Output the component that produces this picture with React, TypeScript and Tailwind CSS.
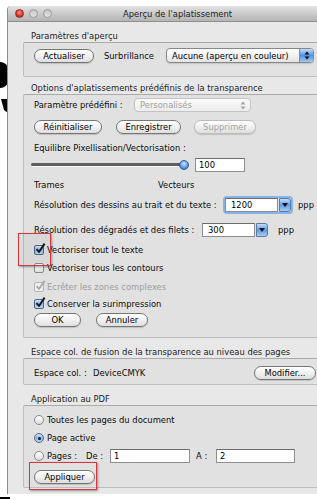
import React from "react";

type Kids = { children?: React.ReactNode; className?: string };

function Btn({ className = "", disabled = false, children }: Kids & { disabled?: boolean }) {
  return (
    <div
      className={`h-[14px] shrink-0 flex items-center justify-center rounded-full border bg-linear-to-b from-white via-[#f1f1f1] to-[#dedede] shadow-[0_1px_1px_rgba(0,0,0,0.15)] ${
        disabled ? "border-[#bcbcbc] text-[#a2a2a2]" : "border-[#767676] text-[#000000]"
      } ${className}`}
    >
      {children}
    </div>
  );
}

function Check({ checked = false, disabled = false }: { checked?: boolean; disabled?: boolean }) {
  return (
    <div className="relative w-[10px] h-[10px] shrink-0">
      <div
        className={`w-[10px] h-[10px] rounded-[2px] border ${
          disabled
            ? "border-[#b3b3b3] bg-[#f1f1f1]"
            : checked
            ? "border-[#4f6684] bg-linear-to-b from-[#d5e7fa] via-[#86b7ea] to-[#bcd9f6]"
            : "border-[#8a8a8a] bg-linear-to-b from-white to-[#dedede]"
        }`}
      />
      {checked && (
        <svg className="absolute left-[1px] top-[-2px]" width="11" height="11" viewBox="0 0 11 11">
          <path
            d="M1.6 6.2 L4 9 L9.6 0.6"
            fill="none"
            stroke={disabled ? "#a9a9a9" : "#161616"}
            strokeWidth="1.9"
            strokeLinejoin="round"
          />
        </svg>
      )}
    </div>
  );
}

function Radio({ on = false }: { on?: boolean }) {
  return (
    <div
      className={`w-[10px] h-[10px] shrink-0 rounded-full border flex items-center justify-center ${
        on
          ? "border-[#4f6684] bg-linear-to-b from-[#d5e7fa] via-[#86b7ea] to-[#bcd9f6]"
          : "border-[#8a8a8a] bg-linear-to-b from-white to-[#dedede]"
      }`}
    >
      {on && <div className="w-[3px] h-[3px] rounded-full bg-[#1a1a1a]" />}
    </div>
  );
}

function UpDown({ color = "#111111" }: { color?: string }) {
  return (
    <svg width="6" height="9" viewBox="0 0 6 9">
      <path d="M3 0.5 L5.5 3.5 H0.5 Z M3 8.5 L5.5 5.5 H0.5 Z" fill={color} />
    </svg>
  );
}

function Combo({ value, className = "", focus = false }: { value: string; className?: string; focus?: boolean }) {
  return (
    <div
      className={`h-[14px] shrink-0 flex items-stretch rounded-[2px] ${
        focus ? "shadow-[0_0_0_2px_#86b4ea]" : ""
      } ${className}`}
    >
      <div className="flex-1 bg-white border border-[#8c8c8c] border-t-[#6c6c6c] flex items-center pl-[5px] text-[#000000]">
        {value}
      </div>
      <div className="w-[12px] ml-[1px] rounded-r-[3px] border border-[#5b79a0] bg-linear-to-b from-[#c4ddf8] via-[#5b9be3] to-[#a6cdf4] flex items-center justify-center">
        <svg width="6" height="4" viewBox="0 0 6 4">
          <path d="M0 0 H6 L3 4 Z" fill="#111111" />
        </svg>
      </div>
    </div>
  );
}

function Group({ className = "", children }: Kids) {
  return (
    <div
      className={`ml-[15px] mr-[28px] border border-[#bdbdbd] border-t-[#aaaaaa] bg-[#e1e1e1] rounded-[2px] pl-[10px] ${className}`}
    >
      {children}
    </div>
  );
}

function Label({ className = "", children }: Kids) {
  return <div className={`h-[12px] flex items-center ml-[23px] text-[#1c1c1c] ${className}`}>{children}</div>;
}

export default function App() {
  return (
    <div className="relative w-[317px] h-[500px] overflow-hidden bg-white pl-[7px] pt-[6px] font-['DejaVu_Sans',sans-serif] text-[8.4px] leading-[12px] text-[#0a0a0a]">
      {/* background shapes behind the window */}
      <svg className="absolute left-0 top-[58px]" width="12" height="60" viewBox="0 0 12 60">
        <path d="M0 4 C6 4 10 10 10 17 C10 24 6 30 0 30 Z" fill="#000" />
        <path d="M1 41 L10 41 L10 45 L8 55 L4 52 Z" fill="#000" />
      </svg>
      <div className="absolute left-[315px] top-[6px] w-[2px] h-[20px] bg-black" />
      <div className="absolute left-0 top-[497px] w-[10px] h-[2px] bg-black" />

      {/* window */}
      <div className="relative z-10 w-[340px] h-[488px] flex flex-col border-l border-[#8c8c8c] bg-[#e8e8e8] rounded-t-[4px]">
        {/* title bar */}
        <div className="h-[16px] shrink-0 flex items-center rounded-t-[4px] bg-linear-to-b from-[#e2e2e2] to-[#b4b4b4] border-b border-[#8e8e8e]">
          <div className="w-[60px] flex items-center gap-[5px] pl-[7px]">
            <div className="w-[9px] h-[9px] rounded-full border border-[#8d2a24] bg-[radial-gradient(circle_at_50%_35%,#ff8a80,#d8352b_60%,#a3241c)]" />
            <div className="w-[9px] h-[9px] rounded-full border border-[#9a9a9a] bg-linear-to-b from-[#c4c4c4] to-[#e4e4e4]" />
            <div className="w-[9px] h-[9px] rounded-full border border-[#9a9a9a] bg-linear-to-b from-[#c4c4c4] to-[#e4e4e4]" />
          </div>
          <div className="flex-1 text-center text-[#1a1a1a]">Aperçu de l'aplatissement</div>
          <div className="w-[60px]" />
        </div>

        {/* body */}
        <div className="flex flex-col pt-[8px]">
          <Label>Paramètres d'aperçu</Label>
          <Group className="h-[35px] pt-[5px]">
            <div className="h-[15px] flex items-center">
              <Btn className="w-[60px]">Actualiser</Btn>
              <div className="w-[62px] ml-[10px] shrink-0">Surbrillance</div>
              <div className="w-[148px] h-[15px] shrink-0 flex rounded-[4px] border border-[#878787] overflow-hidden bg-linear-to-b from-white to-[#e4e4e4] shadow-[0_1px_1px_rgba(0,0,0,0.12)]">
                <div className="flex-1 flex items-center pl-[5px] text-[#000000]">Aucune (aperçu en couleur)</div>
                <div className="w-[14px] border-l border-[#6a8cb6] bg-linear-to-b from-[#c4ddf8] via-[#4f94e3] to-[#9fcaf4] flex items-center justify-center">
                  <UpDown />
                </div>
              </div>
            </div>
          </Group>

          <Label className="mt-[5px]">Options d'aplatissements prédéfinis de la transparence</Label>
          <Group className="h-[244px] pt-[3px]">
            <div className="h-[14px] flex items-center">
              <div className="w-[100px] shrink-0">Paramètre prédéfini :</div>
              <div className="w-[117px] h-[14px] shrink-0 flex items-center rounded-[4px] border border-[#c3c3c3] bg-linear-to-b from-[#fbfbfb] to-[#ececec]">
                <div className="flex-1 pl-[5px] text-[#a0a0a0]">Personalisés</div>
                <div className="w-[14px] flex items-center justify-center">
                  <UpDown color="#a5a5a5" />
                </div>
              </div>
            </div>
            <div className="h-[14px] mt-[8px] flex items-center">
              <Btn className="w-[68px]">Réinitialiser</Btn>
              <Btn className="w-[65px] ml-[14px]">Enregistrer</Btn>
              <Btn className="w-[62px] ml-[13px]" disabled>
                Supprimer
              </Btn>
            </div>
            <div className="h-[12px] mt-[8px] flex items-center">Equilibre Pixellisation/Vectorisation :</div>
            <div className="h-[14px] mt-[4px] flex items-center">
              <div className="relative w-[164px] h-[14px] ml-[-3px] shrink-0">
                <div className="absolute left-0 w-[153px] top-[5px] h-[3px] rounded-full bg-[#5e5e5e] shadow-[0_1px_0_rgba(255,255,255,0.8)]" />
                <div className="absolute left-[148px] top-[2px] w-[10px] h-[10px] rounded-full border border-[#2d5b90] bg-[radial-gradient(circle_at_50%_35%,#d6e9fc,#5a9ce6_55%,#2d6fc0)]" />
              </div>
              <div className="w-[50px] h-[14px] shrink-0 bg-white border border-[#8f8f8f] border-t-[#6c6c6c] flex items-center pl-[3px] text-[#000000]">
                100
              </div>
            </div>
            <div className="h-[12px] mt-[7px] flex items-center">
              <div className="w-[124px] shrink-0">Trames</div>
              <div>Vecteurs</div>
            </div>
            <div className="h-[14px] mt-[7px] flex items-center">
              <div className="w-[191px] shrink-0">Résolution des dessins au trait et du texte :</div>
              <Combo value="1200" className="w-[66px]" focus />
              <div className="ml-[7px]">ppp</div>
            </div>
            <div className="h-[14px] mt-[11px] flex items-center">
              <div className="w-[168px] shrink-0">Résolution des dégradés et des filets :</div>
              <Combo value="300" className="w-[66px]" />
              <div className="ml-[10px]">ppp</div>
            </div>
            <div className="h-[12px] mt-[7px] flex items-center gap-[3px]">
              <Check checked />
              <span>Vectoriser tout le texte</span>
            </div>
            <div className="h-[12px] mt-[6px] flex items-center gap-[3px]">
              <Check />
              <span>Vectoriser tous les contours</span>
            </div>
            <div className="h-[12px] mt-[7px] flex items-center gap-[3px] text-[#9d9d9d]">
              <Check checked disabled />
              <span>Ecrêter les zones complexes</span>
            </div>
            <div className="h-[12px] mt-[5px] flex items-center gap-[3px]">
              <Check checked />
              <span>Conserver la surimpression</span>
            </div>
            <div className="h-[14px] mt-[3px] flex items-center">
              <Btn className="w-[47px]">OK</Btn>
              <Btn className="w-[52px] ml-[15px]">Annuler</Btn>
            </div>
          </Group>

          <Label className="mt-[8px]">Espace col. de fusion de la transparence au niveau des pages</Label>
          <Group className="h-[27px] pt-[7px]">
            <div className="h-[14px] flex items-center">
              <div className="w-[59px] shrink-0">Espace col. :</div>
              <div className="w-[161px] shrink-0">DeviceCMYK</div>
              <Btn className="w-[62px]">Modifier...</Btn>
            </div>
          </Group>

          <Label className="mt-[8px]">Application au PDF</Label>
          <Group className="h-[83px] pt-[8px]">
            <div className="h-[12px] flex items-center gap-[3px]">
              <Radio />
              <span>Toutes les pages du document</span>
            </div>
            <div className="h-[12px] mt-[6px] flex items-center gap-[3px]">
              <Radio on />
              <span>Page active</span>
            </div>
            <div className="h-[14px] mt-[5px] flex items-center">
              <Radio />
              <div className="w-[42px] shrink-0 pl-[3px]">Pages :</div>
              <div className="w-[24px] shrink-0">De :</div>
              <div className="w-[80px] h-[14px] shrink-0 bg-white border border-[#8f8f8f] border-t-[#6c6c6c] flex items-center pl-[3px] text-[#000000]">
                1
              </div>
              <div className="w-[26px] shrink-0 pl-[6px]">A :</div>
              <div className="w-[79px] h-[14px] shrink-0 bg-white border border-[#8f8f8f] border-t-[#6c6c6c] flex items-center pl-[3px] text-[#000000]">
                2
              </div>
            </div>
            <div className="h-[14px] mt-[7px] flex items-center">
              <Btn className="w-[61px]">Appliquer</Btn>
            </div>
          </Group>
        </div>
      </div>

      {/* red highlight annotations */}
      <div className="absolute z-20 left-[18px] top-[233px] w-[33px] h-[33px] border-[1.5px] border-[#d7343c] bg-[rgba(0,0,0,0.04)] shadow-[1px_1px_2px_rgba(0,0,0,0.35)]" />
      <div className="absolute z-20 left-[29px] top-[462px] w-[68px] h-[28px] border-[1.5px] border-[#d7343c] shadow-[1px_1px_2px_rgba(0,0,0,0.35)]" />
    </div>
  );
}
